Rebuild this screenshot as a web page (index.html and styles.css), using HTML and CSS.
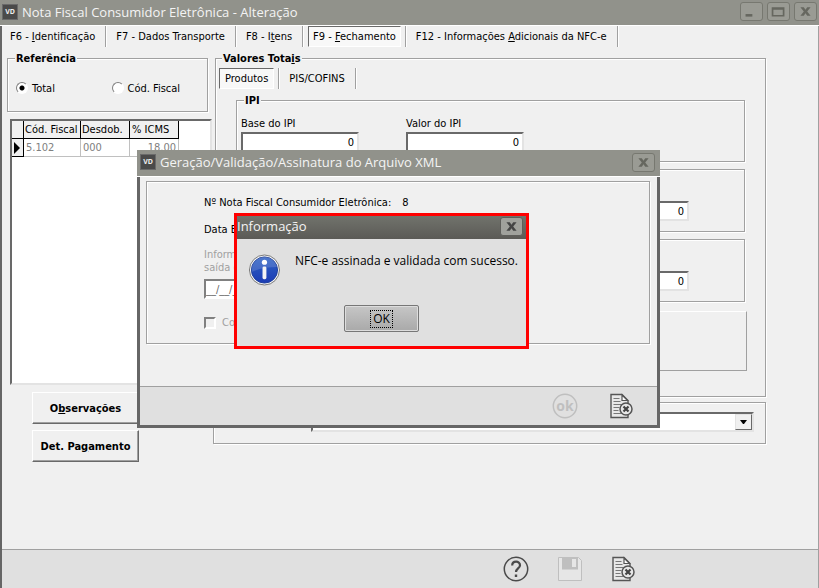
FILE: index.html
```html
<!DOCTYPE html>
<html lang="pt-BR">
<head>
<meta charset="UTF-8" />
<meta name="viewport" content="width=device-width, initial-scale=1" />
<title>Nota Fiscal Consumidor Eletrônica - Alteração</title>
<link rel="stylesheet" href="styles.css">
</head>
<body>

<svg class="defs" width="0" height="0" aria-hidden="true">
  <symbol id="close" viewBox="0 0 24 20">
    <path d="M6 5h4l2 3 2-3h4l-4 5 4 5h-4l-2-3-2 3H6l4-5z" fill="currentColor" />
  </symbol>
  <symbol id="doc" viewBox="0 0 26 26">
    <path d="M2 1.500h11l6 6v17H2z" fill="#e8e8e8" stroke="#555" stroke-width="1.400" />
    <path d="M13 2v5.500h5.500z" fill="#fff" stroke="#555" stroke-width="1.200" />
    <path d="M4.500 5.500h6M4.500 8.500h7M4.500 11.500h8M4.500 14.500h6M4.500 17.500h5M4.500 20.500h8" stroke="#777" />
    <circle cx="17" cy="16" r="6" fill="#e8e8e8" stroke="#555" stroke-width="1.500" />
    <path d="M14.500 13.500l5 5M19.500 13.500l-5 5" stroke="#444" stroke-width="2.200" />
  </symbol>
</svg>

<div class="window">
  <header class="titlebar">
    <span class="logo">VD</span>
    <h1>Nota Fiscal Consumidor Eletrônica - Alteração</h1>
    <button class="winbtn" aria-label="Minimizar"><svg viewBox="0 0 24 20"><path d="M5 13h8v3H5z" fill="currentColor" /></svg></button>
    <button class="winbtn" aria-label="Maximizar"><svg viewBox="0 0 24 20"><path d="M5 6h13v9H5zM5 7h13" fill="none" stroke="currentColor" stroke-width="2" /></svg></button>
    <button class="winbtn" aria-label="Fechar"><svg><use href="#close" /></svg></button>
  </header>

  <nav class="tabs main-tabs">
    <button class="tab">F6 - <u>I</u>dentificação</button>
    <button class="tab">F7 - Dados Transporte</button>
    <button class="tab">F8 - I<u>t</u>ens</button>
    <button class="tab active"><span>F9 - <u>F</u>echamento</span></button>
    <button class="tab">F12 - Informações <u>A</u>dicionais da NFC-e</button>
  </nav>

  <main class="content">
    <div class="left">
      <fieldset class="group reference">
        <legend>Referência</legend>
        <label><input type="radio" name="ref" checked />Total</label>
        <label><input type="radio" name="ref" />Cód. Fiscal</label>
      </fieldset>

      <div class="grid">
        <table>
          <thead>
            <tr><th class="mark"></th><th class="cfop">Cód. Fiscal</th><th class="desdob">Desdob.</th><th class="icms">% ICMS</th></tr>
          </thead>
          <tbody>
            <tr>
              <th class="mark"><svg width="7" height="12" viewBox="0 0 7 12"><path d="M0 0l6 6-6 6z" /></svg></th>
              <td>5.102</td><td>000</td><td class="num">18.00</td>
            </tr>
          </tbody>
        </table>
      </div>

      <div class="actions">
        <button class="raised">O<u>b</u>servações</button>
        <button class="raised">Det. Pa<u>g</u>amento</button>
      </div>
    </div>

    <div class="right">
      <fieldset class="group totals">
        <legend>Valores Tota<u>i</u>s</legend>
        <div class="tabs subtabs">
          <button class="tab active"><span>Produtos</span></button>
          <button class="tab">PIS/COFINS</button>
        </div>
        <fieldset class="group values">
          <legend>IPI</legend>
          <label>Base do IPI<input type="text" value="0" /></label>
          <label>Valor do IPI<input type="text" value="0" /></label>
        </fieldset>
        <fieldset class="group values bare">
          <input type="text" value="0" aria-label="Base" />
          <input type="text" value="0" aria-label="Alíquota" />
          <input type="text" value="0" aria-label="Valor" />
        </fieldset>
        <fieldset class="group values bare">
          <input type="text" value="0" aria-label="Base" />
          <input type="text" value="0" aria-label="Alíquota" />
          <input type="text" value="0" aria-label="Valor" />
        </fieldset>
        <div class="summary"></div>
      </fieldset>

      <div class="group payment">
        <div class="combo">
          <select aria-label="Pagamento"><option></option></select>
          <span class="arrow"><svg width="7" height="4" viewBox="0 0 7 4"><path d="M0 0h7L4 4H3z" /></svg></span>
        </div>
      </div>
    </div>
  </main>

  <footer class="toolbar">
    <button class="tool" aria-label="Ajuda">
      <svg viewBox="0 0 26 26" fill="none" stroke="#4a4a4a">
        <circle cx="13" cy="13" r="11.700" stroke-width="1.500" />
        <path d="M9.200 9.500c0-5 7.800-5 7.800-.3 0 3.200-4 3.300-4 6.800" stroke-width="2.200" />
        <path d="M13 18.500v2.500" stroke-width="2.400" />
      </svg>
    </button>
    <button class="tool" aria-label="Gravar" disabled>
      <svg viewBox="0 0 26 26">
        <path d="M1.500 1.500h20l3 3v20h-23z" fill="#e6e6e6" stroke="#bfbfbf" />
        <path d="M5 1.500h16v12H5z" fill="#bfbfbf" />
        <path d="M15 3h4v8h-4z" fill="#e6e6e6" />
      </svg>
    </button>
    <button class="tool" aria-label="Sair"><svg><use href="#doc" /></svg></button>
  </footer>
</div>

<section class="dialog xml">
  <header class="titlebar">
    <span class="logo">VD</span>
    <h2>Geração/Validação/Assinatura do Arquivo XML</h2>
    <button class="winbtn" aria-label="Fechar"><svg><use href="#close" /></svg></button>
  </header>
  <div class="dialog-body">
    <div class="group form">
      <p class="line"><span>Nº Nota Fiscal Consumidor Eletrônica:</span><span>8</span></p>
      <p class="line">Data Emissão:</p>
      <label class="off exit">Informe a data de<br>saída da nota<input type="text" value="__/__/____" disabled /></label>
      <label class="off check"><input type="checkbox" disabled />Contingência</label>
    </div>
  </div>
  <footer class="toolbar">
    <button class="tool" aria-label="Confirmar" disabled>
      <svg viewBox="0 0 26 26">
        <circle cx="13" cy="13" r="11.700" fill="none" stroke="#bfbfbf" stroke-width="1.500" />
        <text x="13" y="18" text-anchor="middle">ok</text>
      </svg>
    </button>
    <button class="tool" aria-label="Sair"><svg><use href="#doc" /></svg></button>
  </footer>
</section>

<section class="dialog info" role="alertdialog" aria-label="Informação">
  <header class="titlebar">
    <h2>Informação</h2>
    <button class="winbtn" aria-label="Fechar"><svg><use href="#close" /></svg></button>
  </header>
  <div class="message">
    <svg width="34" height="34" viewBox="0 0 34 34">
      <defs>
        <linearGradient id="blue" x1="0" y1="0" x2="0" y2="1">
          <stop offset="0" stop-color="#2e62c4" />
          <stop offset="1" stop-color="#1c3cb4" />
        </linearGradient>
      </defs>
      <circle cx="17" cy="17" r="15.500" fill="#f4f4f4" stroke="#777" />
      <circle cx="17" cy="17" r="13.500" fill="url(#blue)" stroke="#1d3f9c" />
      <path d="M4 19a13 13 0 0 1 26-5c-8 0-18 1-26 5z" fill="#fff" opacity=".15" />
      <circle cx="17" cy="9" r="2.700" fill="#fff" />
      <rect x="15" y="13.500" width="4" height="13" rx="1.500" fill="#f4f4f4" />
    </svg>
    <p>NFC-e assinada e validada com sucesso.</p>
  </div>
  <button class="ok"><span>OK</span></button>
</section>

</body>
</html>
```
FILE: styles.css
```css
* {
  box-sizing: border-box;
}

body {
  margin: 0;
  background: #f0f0f0;
  color: #000;
  font: 11px/14px "DejaVu Sans Condensed", Tahoma, "Noto Sans", sans-serif;
}

button, input, select {
  font: inherit;
  color: inherit;
  margin: 0;
  padding: 0;
  border: 0;
  border-radius: 0;
  background: none;
}

h1, h2, p {
  margin: 0;
}

.defs {
  position: absolute;
}

.window {
  display: flex;
  flex-direction: column;
  min-height: 100vh;
  border-left: 2px solid #666;
  border-right: 1px solid #a0a0a0;
}

/* title bars */

.titlebar {
  display: flex;
  align-items: center;
  gap: 4px;
  height: 26px;
  padding: 0 2px 2px 0;
  background: #91928b;
  border-bottom: 1px solid #fff;
  color: #f4f4f4;
}

.window > .titlebar {
  margin: 0 -1px 0 -2px;
  padding-left: 2px;
}

.titlebar h1, .titlebar h2 {
  flex: 1;
  font: 13px/20px "Open Sans", "Noto Sans", sans-serif;
  white-space: nowrap;
}

.logo {
  width: 16px;
  height: 16px;
  border: 1px solid #6a6a6a;
  background: #4a4a4a;
  color: #eee;
  font: bold 7px/14px "Noto Sans", sans-serif;
  text-align: center;
}

.winbtn {
  width: 23px;
  height: 19px;
  border: 1px solid #777870;
  border-radius: 3px;
  background: #9a9b94;
  color: #66675f;
}

.winbtn svg {
  display: block;
  width: 100%;
  height: 100%;
}

/* tabs */

.tabs {
  display: flex;
  height: 21px;
}

.main-tabs {
  margin-left: -2px;
}

.tab {
  padding: 0 10px;
  border-right: 1px solid #a0a0a0;
  box-shadow: 1px 0 0 #fff;
  white-space: nowrap;
}

.tab.active {
  padding: 0 4px 0 5px;
}

.tab.active span {
  display: block;
  padding: 3px 4px 2px;
  border: 1px solid #a0a0a0;
  border-color: #696969 #fff #fff #696969;
  background: #f8f8f8;
}

/* main form */

.content {
  display: flex;
  flex: 1;
  gap: 1px;
  padding: 3px 52px 0 5px;
}

.left {
  width: 205px;
}

.right {
  flex: 1;
}

.group {
  min-width: 0;
  margin: 0;
  padding: 0;
  border: 1px solid #a0a0a0;
  box-shadow: 1px 1px 0 #fff, inset 1px 1px 0 #fff;
}

.group legend {
  margin-left: 3px;
  padding: 2px 1px 0;
  background: #f0f0f0;
  font-weight: bold;
}

.reference {
  display: flex;
  height: 62px;
  margin-right: 4px;
  padding: 16px 4px;
}

.reference label {
  display: flex;
  align-items: flex-start;
  gap: 4px;
  width: 96px;
  padding-left: 4px;
}

input[type=radio] {
  appearance: none;
  width: 12px;
  height: 12px;
  border: 1px solid #808080;
  border-color: #808080 #fff #fff #808080;
  border-radius: 50%;
  background: #fff;
}

input[type=radio]:checked {
  background: radial-gradient(#000 2px, #fff 3px);
}

.grid {
  height: 266px;
  margin: 7px 0 7px 3px;
  border: 2px solid #696969;
  border-color: #696969 #e3e3e3 #e3e3e3 #696969;
  background: #fff;
}

.grid table {
  width: 167px;
  border-collapse: separate;
  border-spacing: 0;
  table-layout: fixed;
}

.grid th, .grid td {
  height: 18px;
  padding: 1px 2px 0;
  border-right: 1px solid #c0c0c0;
  border-bottom: 1px solid #c0c0c0;
  color: #808080;
  text-align: left;
  white-space: nowrap;
}

.grid th {
  border-color: #000;
  background: #f0f0f0;
  color: #000;
  font-weight: normal;
}

.grid .mark { width: 12px; }
.grid .cfop { width: 57px; padding: 1px 1px 0; }
.grid .desdob { width: 49px; padding: 1px 1px 0; }
.grid .num { text-align: right; }

.mark svg {
  display: block;
}

.actions {
  display: grid;
  gap: 6px;
  width: 107px;
  margin-left: 25px;
}

.raised {
  height: 32px;
  padding-top: 2px;
  border: 1px solid #696969;
  border-color: #fff #696969 #696969 #fff;
  box-shadow: inset -1px -1px 0 #a0a0a0;
  font-weight: bold;
  white-space: nowrap;
}

.totals {
  height: 347px;
  margin-left: 2px;
  padding: 0 20px 0 3px;
}

.subtabs {
  margin-top: 2px;
}

.subtabs .tab.active {
  padding-left: 0;
}

.subtabs .tab.active span {
  padding: 3px 5px 2px;
}

.values {
  display: flex;
  gap: 47px;
  height: 70px;
  margin: 3px 0 7px 17px;
  padding: 9px 4px 0;
}

.values.bare {
  height: 63px;
  margin-top: 0;
  padding-top: 31px;
}

.values label {
  width: 118px;
}

.values input {
  display: block;
  width: 118px;
  height: 20px;
  padding: 0 3px;
  border: 2px solid #696969;
  border-color: #696969 #e3e3e3 #e3e3e3 #696969;
  background: #fff;
  text-align: right;
}

.values label input {
  margin-top: 1px;
}

.summary {
  height: 60px;
  margin: 9px -2px 0 17px;
  border: 1px solid #a0a0a0;
  border-color: #fff #a0a0a0 #a0a0a0 #fff;
}

.payment {
  height: 42px;
  margin-top: 5px;
  padding: 9px 11px 0 97px;
}

.combo {
  display: flex;
  height: 20px;
  border: 2px solid #696969;
  border-color: #696969 #e3e3e3 #e3e3e3 #696969;
  background: #fff;
}

.combo select {
  flex: 1;
  appearance: none;
}

.arrow {
  display: grid;
  place-items: center;
  width: 17px;
  border: 1px solid #696969;
  border-color: #e3e3e3 #696969 #696969 #e3e3e3;
  background: #f0f0f0;
}

/* bottom bars */

.toolbar {
  display: flex;
  justify-content: flex-end;
  align-items: center;
  gap: 28px;
  height: 39px;
  padding-right: 181px;
  border-top: 1px solid #a0a0a0;
  background: #e0e0e0;
}

.tool {
  width: 26px;
  height: 26px;
}

.tool svg {
  display: block;
  width: 26px;
  height: 26px;
}

.tool text {
  fill: #bfbfbf;
  font: bold 14px "Open Sans", sans-serif;
}

/* floating windows */

.dialog {
  position: absolute;
  display: flex;
  flex-direction: column;
}

.xml {
  left: 137px;
  top: 150px;
  width: 523px;
  border: 3px solid #666;
  border-top: 0;
  background: #f0f0f0;
}

.xml .titlebar {
  height: 27px;
  margin: 0 -3px;
  padding: 0 5px 2px 3px;
}

.dialog-body {
  padding: 4px 7px 42px 6px;
}

.form {
  height: 163px;
  padding: 14px 57px 0;
}

.line {
  display: flex;
  gap: 11px;
  margin-bottom: 13px;
}

.off {
  color: #a0a0a0;
}

.exit {
  display: block;
  margin-top: -2px;
  line-height: 13px;
}

.exit input {
  display: block;
  width: 90px;
  height: 20px;
  margin-top: 5px;
  border: 2px solid #808080;
  border-color: #808080 #fff #fff #808080;
  background: #fff;
  color: #666;
}

.check {
  display: flex;
  align-items: center;
  gap: 6px;
  margin-top: 17px;
}

input[type=checkbox] {
  appearance: none;
  width: 12px;
  height: 12px;
  border: 2px solid #808080;
  border-color: #808080 #fff #fff #808080;
}

.xml .toolbar {
  gap: 31px;
  padding-right: 22px;
}

.info {
  left: 234px;
  top: 213px;
  width: 295px;
  height: 136px;
  border: 3px solid #f00;
  background: #e0e0e0;
  font: 12px/16px "Open Sans", "Noto Sans", sans-serif;
}

.info .titlebar {
  height: 23px;
  padding: 0 3px 3px 0;
  border: 0;
  background: linear-gradient(#71736c, #5b5a56);
}

.info .winbtn {
  border-color: #5e5e5a;
  background: #a0a19c;
  color: #444;
}

.message {
  display: flex;
  gap: 14px;
  padding: 14px 8px 0 11px;
}

.message p {
  white-space: nowrap;
}

.ok {
  width: 75px;
  height: 27px;
  margin: 18px auto 0 107px;
  border: 1px solid #777;
  border-radius: 2px;
  box-shadow: inset 0 0 0 1px #ddd;
  background: linear-gradient(#c6c6c6, #a9a9a9);
}

.ok span {
  display: inline-block;
  padding: 0 2px;
  border: 1px dotted #000;
}
```
